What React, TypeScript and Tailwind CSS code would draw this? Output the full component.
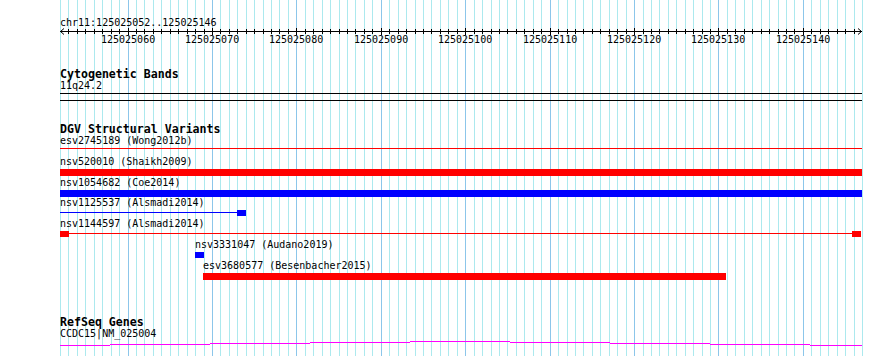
const START = 125025052;
const END = 125025146;
const LEFT = 60;
const RIGHT = 862;
const BP = (RIGHT - LEFT) / (END - START + 1);

const xAt = (i: number) => Math.round(LEFT + i * BP);
const bases = Array.from({ length: END - START + 2 }, (_, i) => i);

type Part = { from: number; to: number; kind: "bar" | "line" | "box" };

interface Variant {
  name: string;
  study: string;
  color: string;
  labelX: number;
  lineTop: number;
  rowH: number;
  parts: Part[];
}

const variants: Variant[] = [
  { name: "esv2745189", study: "Wong2012b", color: "#ff0000", labelX: 60, lineTop: 0, rowH: 21, parts: [{ from: 60, to: 862, kind: "line" }] },
  { name: "nsv520010", study: "Shaikh2009", color: "#ff0000", labelX: 60, lineTop: 3, rowH: 21, parts: [{ from: 60, to: 862, kind: "bar" }] },
  { name: "nsv1054682", study: "Coe2014", color: "#0000ff", labelX: 60, lineTop: 3, rowH: 20, parts: [{ from: 60, to: 862, kind: "bar" }] },
  {
    name: "nsv1125537", study: "Alsmadi2014", color: "#0000ff", labelX: 60, lineTop: 2, rowH: 21,
    parts: [
      { from: 60, to: 237, kind: "line" },
      { from: 237, to: 246, kind: "box" },
    ],
  },
  {
    name: "nsv1144597", study: "Alsmadi2014", color: "#ff0000", labelX: 60, lineTop: 2, rowH: 21,
    parts: [
      { from: 60, to: 69, kind: "box" },
      { from: 69, to: 852, kind: "line" },
      { from: 852, to: 861, kind: "box" },
    ],
  },
  { name: "nsv3331047", study: "Audano2019", color: "#0000ff", labelX: 195, lineTop: 3, rowH: 21, parts: [{ from: 195, to: 204, kind: "box" }] },
  { name: "esv3680577", study: "Besenbacher2015", color: "#ff0000", labelX: 203, lineTop: 3, rowH: 19, parts: [{ from: 203, to: 726, kind: "bar" }] },
];

// intron line of the gene, drawn as a shallow arc of steps
const geneSteps: [number, number, number][] = [
  [60, 110, 4],
  [110, 210, 3],
  [210, 310, 2],
  [310, 410, 1],
  [410, 510, 0],
  [510, 610, 1],
  [610, 710, 2],
  [710, 810, 3],
  [810, 862, 4],
];

function Grid() {
  return (
    <svg className="absolute inset-0" width={890} height={356}>
      {bases.map((i) => {
        const major = (START + i) % 10 === 0;
        return (
          <line
            key={i}
            x1={xAt(i) + 0.5}
            x2={xAt(i) + 0.5}
            y1={0}
            y2={356}
            stroke={major ? "#8cc6ea" : "#ace9ee"}
            strokeWidth={1}
          />
        );
      })}
    </svg>
  );
}

function Ruler() {
  const labels = bases.filter((i) => (START + i) % 10 === 0);
  return (
    <div className="h-[68px]">
      <div className="pt-[18px] pl-[60px] text-[10px] leading-[10px]">chr11:125025052..125025146</div>
      <svg className="block" width={890} height={7}>
        <line x1={LEFT} x2={RIGHT} y1={3.5} y2={3.5} stroke="#000" />
        <polyline points={`${LEFT + 4},0.5 ${LEFT + 0.5},3.5 ${LEFT + 4},6.5`} fill="none" stroke="#000" />
        <polyline points={`${RIGHT - 4},0.5 ${RIGHT - 0.5},3.5 ${RIGHT - 4},6.5`} fill="none" stroke="#000" />
        {bases.slice(1, -1).map((i) => {
          const major = (START + i) % 10 === 0;
          return (
            <line
              key={i}
              x1={xAt(i) + 0.5}
              x2={xAt(i) + 0.5}
              y1={major ? 0 : 1}
              y2={major ? 7 : 6}
              stroke="#000"
            />
          );
        })}
      </svg>
      <div className="relative h-[10px] text-[10px] leading-[10px]">
        {labels.map((i) => (
          <span key={i} className="absolute top-0 w-[54px] text-center" style={{ left: xAt(i) - 27 }}>
            {START + i}
          </span>
        ))}
      </div>
    </div>
  );
}

function TrackTitle({ children }: { children: string }) {
  return <div className="h-[13px] pl-[60px] text-[11.6px] leading-[13px] font-bold">{children}</div>;
}

function VariantRow({ v }: { v: Variant }) {
  return (
    <div style={{ height: v.rowH }}>
      <div className="h-[12px] text-[10px] leading-[10px] whitespace-pre" style={{ paddingLeft: v.labelX }}>
        {`${v.name} (${v.study})`}
      </div>
      <div className="relative h-[7px]">
        {v.parts.map((p, k) => (
          <div
            key={k}
            className={p.kind === "line" ? "absolute h-[1px]" : p.kind === "box" ? "absolute top-0 h-[6px]" : "absolute top-0 h-[7px]"}
            style={{
              left: p.from,
              width: p.to - p.from,
              top: p.kind === "line" ? v.lineTop : 0,
              backgroundColor: v.color,
            }}
          />
        ))}
      </div>
    </div>
  );
}

export default function App() {
  return (
    <div className="relative w-[890px] h-[356px] overflow-hidden bg-white text-black font-[family-name:'DejaVu_Sans_Mono','Liberation_Mono',monospace]">
      <Grid />
      <div className="relative">
        <Ruler />

        {/* Cytogenetic Bands */}
        <TrackTitle>Cytogenetic Bands</TrackTitle>
        <div className="h-[12px] pl-[60px] text-[10px] leading-[10px]">11q24.2</div>
        <div className="ml-[60px] w-[802px] h-[8px] border-y border-black" />

        {/* DGV Structural Variants */}
        <div className="mt-[22px]">
          <TrackTitle>DGV Structural Variants</TrackTitle>
          {variants.map((v) => (
            <VariantRow key={v.name} v={v} />
          ))}
        </div>

        {/* RefSeq Genes */}
        <div className="mt-[36px]">
          <TrackTitle>RefSeq Genes</TrackTitle>
          <div className="h-[12px] pl-[60px] text-[10px] leading-[10px]">CCDC15|NM_025004</div>
          <svg className="block" width={890} height={15}>
            {geneSteps.map(([a, b, y], k) => (
              <line key={k} x1={a} x2={b} y1={y + 0.5} y2={y + 0.5} stroke="#ff00ff" strokeWidth={1} />
            ))}
          </svg>
        </div>
      </div>
    </div>
  );
}
